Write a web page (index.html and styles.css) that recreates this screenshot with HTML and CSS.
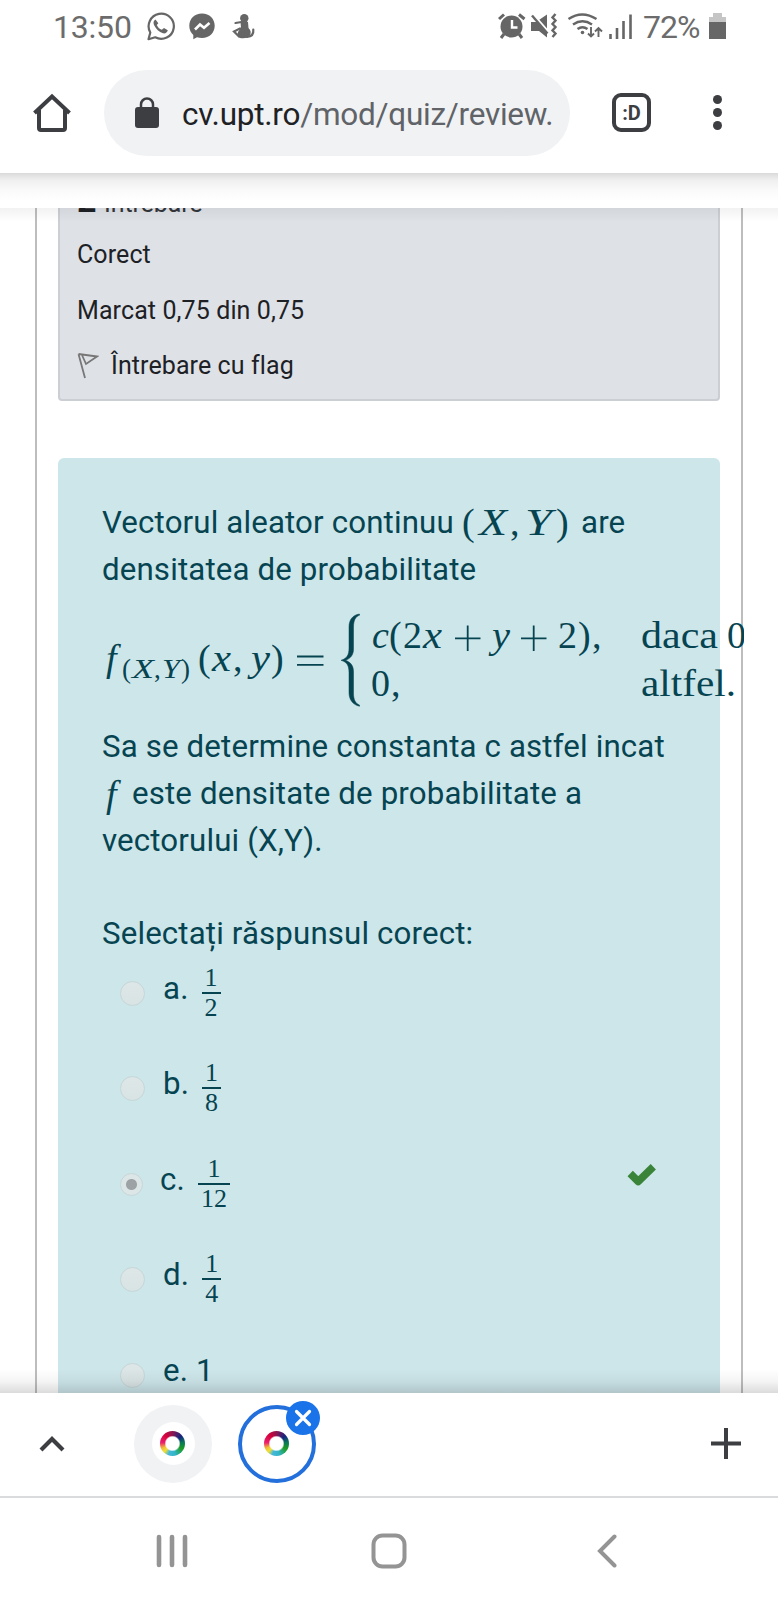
FILE: index.html
```html
<!DOCTYPE html>
<html lang="ro">
<head>
<meta charset="utf-8">
<title>cv.upt.ro</title>
<link rel="stylesheet" href="styles.css">
</head>
<body>
<div class="phone">
  <header class="status">
    <span class="time">13:50</span>
    <svg class="left-icons" width="110" height="30" viewBox="146 12 110 30">
      <path d="M148.5 39.2l1.800-6.700a12.600 12.600 0 1 1 4.900 4.800z" fill="none" stroke="#666" stroke-width="2.200" stroke-linejoin="round"/>
      <path d="M155.500 19.500c-2 1-2.500 3-1.500 5.500 2 4 5 7 9 8.300 2 .5 4.300-.5 4.800-3l-3.800-2.300-2.200 1.800c-2.500-1-4-2.500-5-4.800l1.500-1.800z" fill="#666"/>
      <path d="M202 13.500c-7.500 0-12.700 5.300-12.700 12.300 0 3.800 1.400 7 4 9.200v4.300l3.700-2c1.600.5 3.200.7 5 .7 7.500 0 12.700-5.200 12.700-12.200S209.500 13.500 202 13.500z" fill="#666"/>
      <path d="M195 29.500l5-5 4 3.300 5.500-4.800" fill="none" stroke="#fff" stroke-width="2.600"/>
      <circle cx="244.300" cy="18.300" r="4.200" fill="#666"/>
      <path d="M240.500 22q4-1.500 7.500 0l.5 6q3.500 3.500 1.500 7c-1 2.300-3.500 3.200-7 3.200-4.500 0-6-2-5.300-5 .5-2.700 2.500-3.500 3.300-5.500z" fill="#666"/>
      <path d="M241.500 22l-6 1M240 28.500l-6 3 5 5M247 37c4.500-.5 6.800-3 6.300-7.500" fill="none" stroke="#666" stroke-width="2.200" stroke-linecap="round"/>
    </svg>
    <svg class="right-icons" width="136" height="30" viewBox="497 12 136 30">
      <g fill="none" stroke="#666" stroke-width="2.400">
        <circle cx="511.500" cy="26.500" r="11" fill="#666" stroke="none"/>
        <path d="M499 19l5-4.500M519 14.500l5.500 4.500M504 34l-3 4M519 34l3 4" stroke-width="3"/>
        <path d="M512 20v7.500h5.500" stroke="#fff"/>
        <path d="M531 22h5l11-7.500v23l-8-6.500h-8z" fill="#666" stroke="none"/>
        <path d="M531.500 13L549 33" stroke="#fff" stroke-width="3"/>
        <path d="M532 15.500l15.500 18"/>
        <path d="M555.500 14l-3 3.500 3 3-3 3.500 3 3-3 3.500 3 3-3 3.500"/>
        <path d="M568.500 19q13.500-9 28 0M573 24.500q9.500-6.500 19 0M577.500 29q5-3.500 10 0"/>
        <circle cx="582.500" cy="32.500" r="1.800" fill="#666" stroke="none"/>
        <path d="M591 27v9M588 33.500l3 3 3-3M598.500 37v-9M595 31.500l3.500-3.500 3.500 3.500" stroke-width="1.900"/>
        <path d="M610.500 34v5M617 28v11M623.500 21v18M630.500 14.500v24.500" stroke-width="2.600"/>
      </g>
    </svg>
    <span class="percent">72%</span>
    <svg class="battery" width="17" height="27" viewBox="0 0 17 27"><path d="M4 0h9v4h4v6H0V4h4z" fill="#c5c5c5"/><path d="M0 9h17v17H0z" fill="#666"/></svg>
  </header>

  <div class="toolbar">
    <svg class="home" width="40" height="40" viewBox="0 0 40 40"><path d="M2.500 20L20 3.500 37.500 20M7 17v18q0 2 2 2h22q2 0 2-2V17" fill="none" stroke="#3c3e42" stroke-width="4"/></svg>
    <div class="omnibox">
      <svg width="24" height="31" viewBox="0 0 24 31"><rect x="0" y="10" width="24" height="21" rx="3" fill="#3c3e42"/><path d="M6 11V7.500a6 6 0 0 1 12 0V11" fill="none" stroke="#3c3e42" stroke-width="2.500"/></svg>
      <span class="url"><b>cv.upt.ro</b>/mod/quiz/review.</span>
    </div>
    <div class="tabs">:D</div>
    <div class="menu"><i></i><i></i><i></i></div>
  </div>
  <div class="toolbar-shadow"></div>

  <main class="viewport">
    <div class="page">
      <section class="info">
        <p class="qno"><b>2</b><span>Întrebare</span></p>
        <p>Corect</p>
        <p>Marcat 0,75 din 0,75</p>
        <p class="flag"><svg width="22" height="26" viewBox="0 0 22 26"><path d="M1.500 1l6.500 24M1.500 1L20 3.500 9 11 5 2" fill="none" stroke="#777" stroke-width="1.800"/></svg><span>Întrebare cu flag</span></p>
      </section>

      <section class="question">
        <p><span class="l1">Vectorul aleator continuu</span><svg class="inline-math" width="110" height="46" viewBox="462 498 110 46"><g class="m"><text class="r" x="462" y="534">(</text><text x="479" y="534" textLength="28" lengthAdjust="spacingAndGlyphs">X</text><text class="r" x="510" y="534">,</text><text x="525" y="534" textLength="27" lengthAdjust="spacingAndGlyphs">Y</text><text class="r" x="556" y="534">)</text></g></svg><span class="are">are</span></p>
        <p class="l2">densitatea de probabilitate</p>
        <svg class="formula" width="642" height="124" viewBox="102 604 642 124">
          <g class="m">
            <text x="106" y="668.500">f</text>
            <g class="sub"><text class="r" x="122" y="676">(</text><text x="132" y="676" textLength="22" lengthAdjust="spacingAndGlyphs">X</text><text class="r" x="154" y="676">,</text><text x="162" y="676" textLength="18" lengthAdjust="spacingAndGlyphs">Y</text><text class="r" x="181" y="676">)</text></g>
            <text class="r" x="198" y="668.500">(</text>
            <text x="212" y="668.500" textLength="19" lengthAdjust="spacingAndGlyphs">x</text>
            <text class="r" x="233" y="668.500">,</text>
            <text x="251" y="668.500" textLength="19" lengthAdjust="spacingAndGlyphs">y</text>
            <text class="r" x="271" y="668.500">)</text>
            <path d="M297 654.500h26.500M297 662.800h26.500" class="rule"/>
            <path class="brace" d="M359.500 612c-7 1-10.500 6-10.500 13v21c0 7-2 10.500-8 12.300 6 1.800 8 5.300 8 12.300v20c0 7 3.500 12 10.500 13.700v-1.200c-4-1.500-6-5.500-6-11.500v-22c0-6-3-9.500-8-11.300 5-1.800 8-5.300 8-11.300v-22c0-6.500 2-10.500 6-11.800z"/>
            <text x="372" y="646">c</text>
            <text class="r" x="389" y="646">(</text>
            <text class="r" x="403" y="646">2</text>
            <text x="423" y="646" textLength="19" lengthAdjust="spacingAndGlyphs">x</text>
            <path class="rule" d="M455 636.300h25.500M467.700 623.500v25.500M521 636.300h25.500M533.700 623.500v25.500"/>
            <text x="492" y="646" textLength="18" lengthAdjust="spacingAndGlyphs">y</text>
            <text class="r" x="558" y="646">2</text>
            <text class="r" x="578" y="646">)</text>
            <text class="r" x="592" y="646">,</text>
            <text class="r" x="641" y="646" textLength="77" lengthAdjust="spacingAndGlyphs">daca</text>
            <text class="r" x="727" y="646">0</text>
            <text class="r" x="371" y="694">0</text>
            <text class="r" x="391" y="694">,</text>
            <text class="r" x="641" y="694" textLength="95" lengthAdjust="spacingAndGlyphs">altfel.</text>
          </g>
        </svg>
        <p class="l3">Sa se determine constanta c astfel incat</p>
        <p class="l4"><svg class="inline-f" width="30" height="46" viewBox="102 767 30 46"><text class="m" x="106" y="803.500">f</text></svg><span>este densitate de probabilitate a</span></p>
        <p class="l5">vectorului (X,Y).</p>
        <p class="select">Selectați răspunsul corect:</p>
        <ul class="answers">
          <li><i class="radio"></i><span>a.</span><span class="frac"><b>1</b><b>2</b></span></li>
          <li><i class="radio"></i><span>b.</span><span class="frac"><b>1</b><b>8</b></span></li>
          <li class="chosen"><i class="radio"></i><span>c.</span><span class="frac"><b>1</b><b>12</b></span><svg class="check" width="32" height="26" viewBox="0 0 32 26"><path d="M4.200 11.500l8 8L27.300 4.800" fill="none" stroke="#398439" stroke-width="7.500" stroke-linejoin="round"/></svg></li>
          <li><i class="radio"></i><span>d.</span><span class="frac"><b>1</b><b>4</b></span></li>
          <li><i class="radio"></i><span>e. 1</span></li>
        </ul>
      </section>
    </div>
  </main>

  <div class="tabstrip">
    <svg class="up" width="26" height="16" viewBox="0 0 26 16"><path d="M2 14L13 3l11 11" fill="none" stroke="#3c3e42" stroke-width="4.200"/></svg>
    <div class="tab"><div class="disc"><i class="swirl"></i></div></div>
    <div class="tab active"><i class="swirl"></i><span class="close"><svg width="18" height="18" viewBox="0 0 18 18"><path d="M2.500 2.500l13 13M15.500 2.500l-13 13" stroke="#fff" stroke-width="3.200" stroke-linecap="round"/></svg></span></div>
    <svg class="plus" width="30" height="31" viewBox="0 0 30 31"><path d="M15 0v31M0 15.500h30" stroke="#3c3e42" stroke-width="4"/></svg>
  </div>

  <nav class="navbar">
    <svg width="32" height="34" viewBox="0 0 32 34"><path d="M3 3v28M16 3v28M29 3v28" stroke="#949494" stroke-width="4.600" stroke-linecap="round"/></svg>
    <svg class="home-key" width="36" height="36" viewBox="0 0 36 36"><rect x="2.500" y="2.500" width="31" height="31" rx="9" fill="none" stroke="#949494" stroke-width="4"/></svg>
    <svg width="20" height="34" viewBox="0 0 20 34"><path d="M17.500 2.500L3 17l14.500 14.500" fill="none" stroke="#949494" stroke-width="4" stroke-linecap="round"/></svg>
  </nav>
</div>
</body>
</html>
```
FILE: styles.css
```css
* { box-sizing: border-box; }
body { margin: 0; background: #fff; font-family: Roboto, "Liberation Sans", sans-serif; }
p, ul { margin: 0; padding: 0; }
svg { display: block; flex: none; }
.phone { display: flex; flex-direction: column; width: 778px; height: 1600px; overflow: hidden; }

.status { display: flex; align-items: flex-start; height: 54px; padding: 12px 0 0 53px; color: #6c6c6c; font-size: 32px; line-height: 30px; }
.time { width: 93px; letter-spacing: -0.2px; }
.right-icons { margin-left: 241px; }
.percent { width: 66px; margin-left: 10px; letter-spacing: -1px; }
.battery { margin-top: 1px; }

.toolbar { display: flex; align-items: center; height: 119px; padding: 0 34px 2px 32px; }
.omnibox { display: flex; align-items: center; width: 466px; height: 86px; margin-left: 32px; padding-left: 31px; border-radius: 43px; background: #f1f2f4; }
.url { margin: 3px 0 0 23px; color: #606367; font-size: 31.500px; letter-spacing: -0.25px; white-space: nowrap; }
.url b { color: #202124; font-weight: 400; }
.tabs { display: flex; align-items: center; justify-content: center; width: 39px; height: 39px; margin-left: 42px; border: 4px solid #3c3e42; border-radius: 9px; color: #3c3e42; font-size: 20px; font-weight: 700; }
.menu { display: flex; flex-direction: column; gap: 4px; margin-left: auto; margin-right: 22px; }
.menu i { width: 9px; height: 9px; border-radius: 50%; background: #3c3e42; }
.toolbar-shadow { flex: none; height: 35px; background: linear-gradient(#dadada, #efefef 20%, #fafafa 50%, #fff 80%); }

.viewport { position: relative; flex: none; height: 1185px; padding: 0 35px; overflow: hidden; }
.viewport::before, .viewport::after { content: ""; position: absolute; z-index: 1; left: 0; right: 0; }
.viewport::before { top: 0; height: 14px; background: linear-gradient(rgba(0,0,0,.05), transparent); }
.viewport::after { bottom: 0; height: 24px; background: linear-gradient(transparent, rgba(0,0,0,.04) 50%, rgba(0,0,0,.14)); }
.page { width: 708px; height: 1185px; padding: 0 21px; border: solid #bdbdbd; border-width: 0 2px; }
.info { display: flow-root; width: 662px; height: 193px; padding-left: 17px; border: solid #cbcfd3; border-width: 0 2px 2px; border-radius: 0 0 4px 4px; background: #dee1e6; color: #1d2125; font-size: 25px; line-height: 37.500px; letter-spacing: .1px; }
.info p { height: 37.500px; margin-bottom: 18.200px; white-space: nowrap; }
.info .qno { display: flex; align-items: baseline; height: 27px; margin-bottom: 0; margin-top: -26px; line-height: 37.500px; }
.qno b { width: 27px; font-size: 34px; }
.qno span { color: #33363a; letter-spacing: -.1px; }
.info .qno + p { margin-top: 27px; }
.info .flag { display: flex; align-items: center; gap: 12px; }

.question { width: 662px; min-height: 960px; margin-top: 57px; padding: 41px 0 0 44px; border-radius: 6px; background: #cde6ea; color: #064451; font-size: 31.250px; line-height: 47px; letter-spacing: .14px; white-space: nowrap; }
.question p { height: 47px; }
.question p:first-child { display: flex; }
.l1 { width: 360px; }
.are { margin-left: 9px; }
.m { fill: #064451; font: italic 38px "Liberation Serif", serif; letter-spacing: 0; }
.m .r { font-style: normal; }
.m .sub { font-size: 27px; }
.rule { fill: none; stroke: #064451; stroke-width: 1.800; }
.brace { stroke: #064451; stroke-width: .5; }
.formula { margin: 13px 0 -7.500px; }
.question .l4 { display: flex; }
.question .select { margin-top: 46.500px; }

.answers { list-style: none; }
.answers li { display: flex; height: 95.400px; padding-left: 18px; }
.answers span:not(.frac) { margin: 8px 0 0 18px; }
.radio { width: 25px; height: 25px; margin-top: 24px; border: 1px solid #c6d6d8; border-radius: 50%; background: linear-gradient(#dee7e7, #d8e3e4); }
.frac { display: flex; flex-direction: column; align-items: center; align-self: flex-start; margin: 7px 0 0 13px; font: 26px/28px "Liberation Serif", serif; }
.frac b { font-weight: 400; padding: 0 3px; }
.frac b:first-child { border-bottom: 2px solid #064451; min-width: 19px; text-align: center; align-self: stretch; }
.chosen .radio { width: 23px; height: 23px; margin-top: 25px; background: radial-gradient(circle, #9da3a4 5px, #dce6e7 6px); }
.answers .chosen span:not(.frac) { margin-left: 17px; }
.check { margin: 14px 62px 0 auto; }

.tabstrip { display: flex; align-items: center; flex: none; height: 105px; padding: 0 37px 2px 39px; border-bottom: 2px solid #dadbdd; }
.tab { position: relative; display: flex; align-items: center; justify-content: center; width: 78px; height: 78px; margin-left: 69px; border-radius: 50%; background: #f1f2f4; }
.tab.active { margin-left: 26px; border: 4px solid #236fdb; background: #fff; }
.disc { display: flex; align-items: center; justify-content: center; width: 43px; height: 43px; border-radius: 50%; background: #fff; }
.swirl { width: 25px; height: 25px; margin-right: 2px; border-radius: 50%; background: radial-gradient(circle, #fff 6.500px, transparent 8px), conic-gradient(#8c1650, #142480 50deg, #087a56 85deg, #1b9c22 120deg, #32b5c4 165deg, #44b7dc 200deg, #f1df35 225deg, #f1c035 245deg, #ed206e 275deg, #d5003b 320deg, #8c1650); }
.close { position: absolute; top: -8px; right: -8px; display: flex; align-items: center; justify-content: center; width: 34px; height: 34px; border-radius: 50%; background: #1a73e8; }
.plus { margin-left: auto; }
.navbar { display: flex; flex: 1; align-items: center; justify-content: space-between; padding: 4px 161px 0 156px; }
.home-key { margin-right: 8px; }
```
